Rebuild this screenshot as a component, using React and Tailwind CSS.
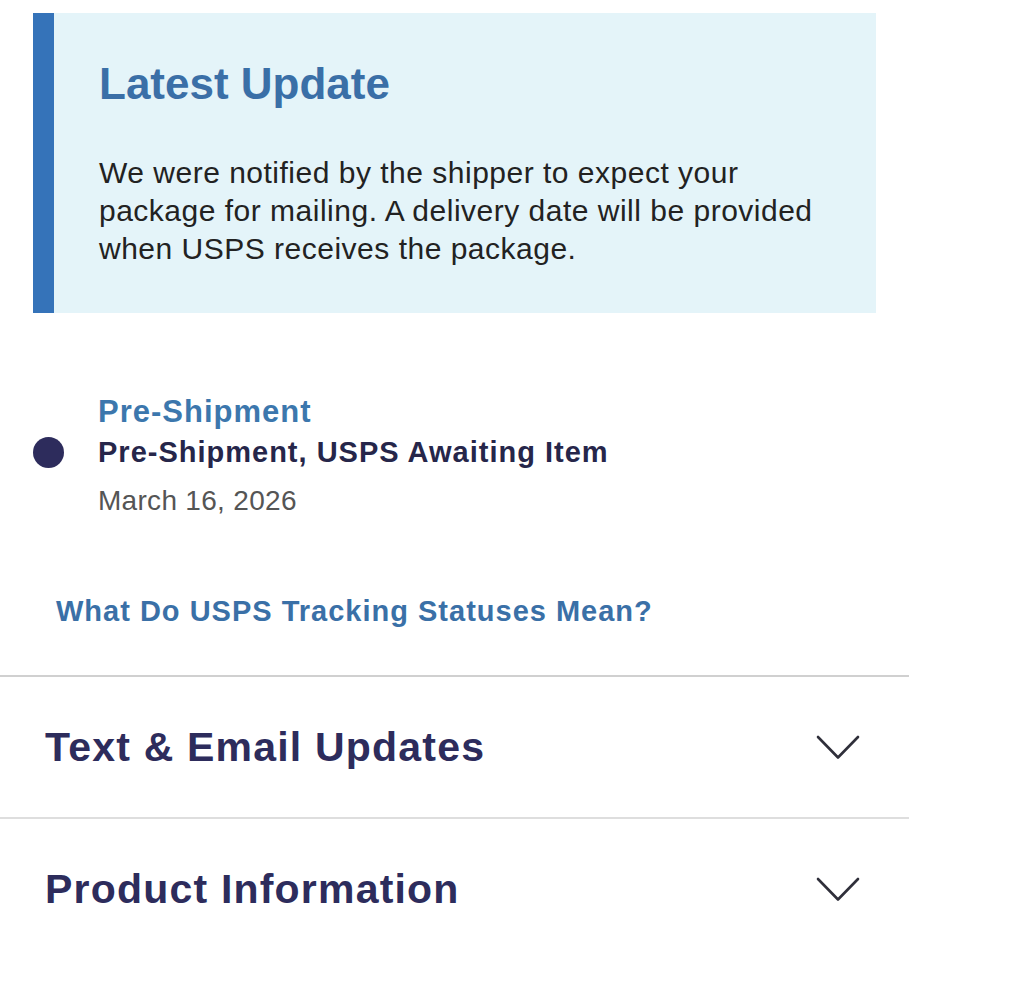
import React from 'react';

const Chevron = () => (
  <svg width="48" height="28" viewBox="0 0 48 28" fill="none" className="shrink-0">
    <path d="M4 4 L24 24.5 L44 4" stroke="#2f2f3a" strokeWidth="2.6" strokeLinecap="round" strokeLinejoin="round" />
  </svg>
);

const AccordionRow = ({ title }) => (
  <div className="h-[140px] flex items-center justify-between pl-[45px] pr-[47px]">
    <h3 className="text-[41px] leading-[41px] font-bold tracking-[1.2px] text-[#2d2c5c]">{title}</h3>
    <Chevron />
  </div>
);

export default function App() {
  return (
    <div className="min-h-screen bg-white font-['Liberation_Sans',Arial,sans-serif]">
      <div className="w-[909px] pt-[13px]">
        {/* Latest update banner */}
        <div className="ml-[33px] w-[843px] h-[300px] border-l-[21px] border-[#3573b9] bg-[#e4f4f9] pl-[45px] pr-[37px] pt-[49px]">
          <h2 className="text-[44px] leading-[44px] font-bold text-[#3a6fa7]">Latest Update</h2>
          <p className="mt-[48px] text-[30px] leading-[38px] tracking-[0.5px] text-[#222]">
            We were notified by the shipper to expect your package for mailing. A delivery date will be provided when USPS receives the package.
          </p>
        </div>

        {/* Tracking event */}
        <div className="mt-[84px] ml-[33px] grid grid-cols-[65px_1fr]">
          <div />
          <div className="text-[31px] leading-[30px] font-bold tracking-[1px] text-[#3c77ad]">Pre-Shipment</div>
          <div className="mt-[7px] flex items-center h-[36px]">
            <span className="block w-[31px] h-[31px] rounded-full bg-[#2d2c5c]" />
          </div>
          <div className="mt-[7px] text-[29px] leading-[36px] font-bold tracking-[1px] text-[#26264a]">
            Pre-Shipment, USPS Awaiting Item
          </div>
          <div />
          <div className="mt-[13px] text-[28px] leading-[36px] tracking-[0.3px] text-[#555]">March 16, 2026</div>
        </div>

        <a href="#" className="block mt-[74px] ml-[56px] text-[29px] leading-[36px] font-bold tracking-[1px] text-[#3a70a7]">
          What Do USPS Tracking Statuses Mean?
        </a>

        <div className="mt-[46px] h-[2px] bg-[#d0d0d0]" />
        <AccordionRow title="Text & Email Updates" />
        <div className="h-[2px] bg-[#dedede]" />
        <AccordionRow title="Product Information" />
      </div>
    </div>
  );
}
